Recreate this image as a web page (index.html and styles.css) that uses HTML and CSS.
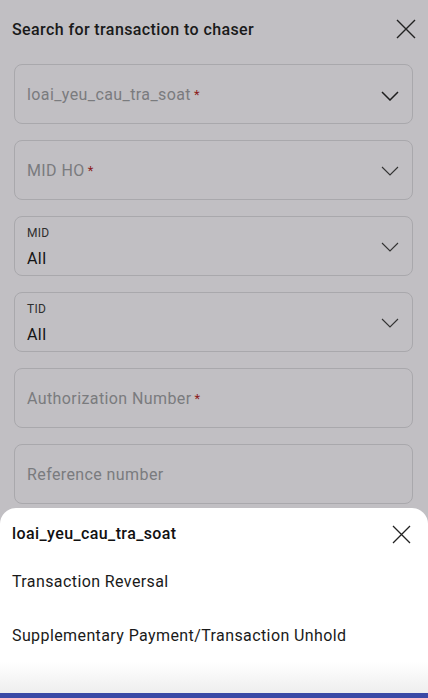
FILE: index.html
```html
<!DOCTYPE html>
<html lang="en">
<head>
    <meta charset="UTF-8">
    <meta name="viewport" content="width=device-width, initial-scale=1.0">
    <title>Search for transaction to chaser</title>
    <link rel="stylesheet" href="styles.css">
</head>
<body>
    <div class="screen">
        <div class="header">
            <h1>Search for transaction to chaser</h1>
            <svg class="close" width="20" height="20" viewBox="0 0 20 20"><path d="M1 1L19 19M19 1L1 19" stroke="#222" stroke-width="1.4" fill="none"/></svg>
        </div>
        <div class="form">
            <div class="field">
                <span class="placeholder">loai_yeu_cau_tra_soat<span class="req">*</span></span>
                <svg class="chevron strong" width="18" height="10" viewBox="0 0 18 10"><path d="M1 1L9 9L17 1" stroke="#1e1e1e" stroke-width="1.5" fill="none"/></svg>
            </div>
            <div class="field">
                <span class="placeholder">MID HO<span class="req">*</span></span>
                <svg class="chevron" width="18" height="10" viewBox="0 0 18 10"><path d="M1 1L9 9L17 1" stroke="#333" stroke-width="1.1" fill="none"/></svg>
            </div>
            <div class="field filled">
                <div class="value-group">
                    <span class="label">MID</span>
                    <span class="value">All</span>
                </div>
                <svg class="chevron" width="18" height="10" viewBox="0 0 18 10"><path d="M1 1L9 9L17 1" stroke="#333" stroke-width="1.1" fill="none"/></svg>
            </div>
            <div class="field filled">
                <div class="value-group">
                    <span class="label">TID</span>
                    <span class="value">All</span>
                </div>
                <svg class="chevron" width="18" height="10" viewBox="0 0 18 10"><path d="M1 1L9 9L17 1" stroke="#333" stroke-width="1.1" fill="none"/></svg>
            </div>
            <div class="field">
                <span class="placeholder">Authorization Number<span class="req">*</span></span>
            </div>
            <div class="field">
                <span class="placeholder">Reference number</span>
            </div>
        </div>

        <div class="sheet">
            <div class="sheet-header">
                <h2>loai_yeu_cau_tra_soat</h2>
                <svg class="close" width="19" height="19" viewBox="0 0 19 19"><path d="M1 1L18 18M18 1L1 18" stroke="#222" stroke-width="1.3" fill="none"/></svg>
            </div>
            <ul class="options">
                <li>Transaction Reversal</li>
                <li>Supplementary Payment/Transaction Unhold</li>
            </ul>
            <div class="fade"></div>
            <div class="bar"></div>
        </div>
    </div>
</body>
</html>
```
FILE: styles.css
```css
* {
    box-sizing: border-box;
}
body {
    margin: 0;
    font-family: Roboto, "Noto Sans", Arial, sans-serif;
    color: #1b1b1b;
}
.screen {
    position: relative;
    width: 428px;
    height: 698px;
    overflow: hidden;
    background-color: #c1bfc3;
}
.header {
    display: flex;
    align-items: center;
    justify-content: space-between;
    height: 58px;
    padding: 0 12px;
}
.header h1 {
    margin: 0;
    font-size: 16px;
    font-weight: 500;
    letter-spacing: 0.4px;
    color: #1a1a1a;
}
.header .close {
    margin-top: -1px;
}
.form {
    display: flex;
    flex-direction: column;
    gap: 16px;
    padding: 6px 15px 0 14px;
}
.field {
    display: flex;
    align-items: center;
    justify-content: space-between;
    height: 60px;
    padding: 2px 13px 0 12px;
    border: 1px solid #a9a8ac;
    border-radius: 8px;
}
.placeholder {
    font-size: 16px;
    line-height: 24px;
    letter-spacing: 0.4px;
    color: #7a7b7e;
}
.req {
    margin-left: 3px;
    font-size: 13px;
    vertical-align: top;
    color: #8c1c1c;
}
.chevron {
    margin-top: 0;
}
.chevron.strong {
    margin-top: 1px;
}
.value-group {
    display: flex;
    flex-direction: column;
    gap: 6px;
    padding-top: 2px;
}
.label {
    font-size: 12px;
    line-height: 16px;
    letter-spacing: 0.3px;
    color: #2e2e2e;
}
.value {
    font-size: 16px;
    line-height: 24px;
    letter-spacing: 0.4px;
    color: #141414;
}
.sheet {
    position: absolute;
    left: 0;
    right: 0;
    bottom: 0;
    background: #fff;
    border-radius: 16px 16px 0 0;
}
.sheet-header {
    display: flex;
    align-items: center;
    justify-content: space-between;
    padding: 14px 17px 8px 12px;
}
.sheet-header h2 {
    margin: 0;
    font-size: 16px;
    line-height: 24px;
    font-weight: 500;
    letter-spacing: 0.4px;
    color: #111;
}
.options {
    list-style: none;
    margin: 0;
    padding: 0;
}
.options li {
    padding: 16px 12px 14px;
    font-size: 16px;
    line-height: 24px;
    letter-spacing: 0.4px;
    color: #1a1a1a;
}
.fade {
    height: 31px;
    background: linear-gradient(#ffffff, #eeeeee);
}
.bar {
    height: 5px;
    background: #3b4aa6;
}
```
